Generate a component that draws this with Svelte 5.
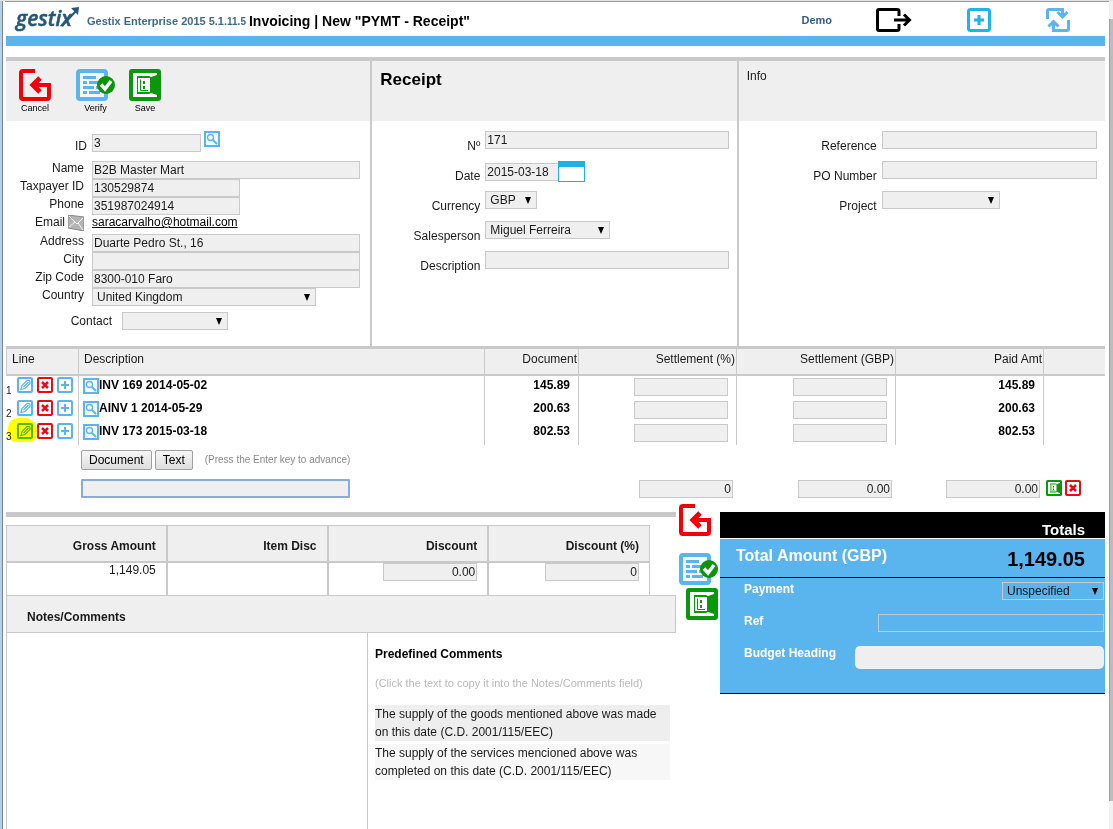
<script>
    let client = $state({
        id: '3',
        name: 'B2B Master Mart',
        taxpayer: '130529874',
        phone: '351987024914',
        email: 'saracarvalho@hotmail.com',
        address: 'Duarte Pedro St., 16',
        city: '',
        zip: '8300-010 Faro'
    });

    let receipt = $state({ number: '171', date: '2015-03-18', description: '' });
    let info = $state({ reference: '', po: '' });

    let lines = $state([
        { id: 1, text: 'INV 169 2014-05-02', document: '145.89', percent: '', amount: '', paid: '145.89' },
        { id: 2, text: 'AINV 1 2014-05-29', document: '200.63', percent: '', amount: '', paid: '200.63' },
        { id: 3, text: 'INV 173 2015-03-18', document: '802.53', percent: '', amount: '', paid: '802.53', marked: true }
    ]);

    let entry = $state({ text: '', percent: '0', amount: '0.00', paid: '0.00' });
    let discount = $state({ value: '0.00', percent: '0' });
    let notes = $state('');

    const comments = [
        'The supply of the goods mentioned above was made on this date (C.D. 2001/115/EEC)',
        'The supply of the services mencioned above was completed on this date (C.D. 2001/115/EEC)'
    ];

    function removeLine(id) {
        lines = lines.filter((line) => line.id !== id);
    }

    function addComment(text) {
        notes = notes ? notes + '\n' + text : text;
    }
</script>

{#snippet cancelIcon()}
    <svg width="32" height="32" viewBox="0 0 32 32" fill="none" stroke="#f00008" stroke-width="4">
        <path d="M16 2H4Q2 2 2 4V28Q2 30 4 30H28Q30 30 30 28V16H13" />
        <path d="M21 9L14 16L21 23" stroke-width="5" />
    </svg>
{/snippet}

{#snippet verifyIcon()}
    <svg width="39" height="32" viewBox="0 0 39 32" fill="none">
        <rect x="2" y="2" width="28" height="28" rx="2" fill="#f4f8fb" stroke="#5ab5ea" stroke-width="4" />
        <path d="M7 8.500H20M7 13.500H11M13 13.500H22M7 18.500H18M20 18.500H22M7 23.500H11M13 23.500H24" stroke="#5ab5ea" stroke-width="3" />
        <circle cx="30" cy="16" r="9" fill="#0b940b" />
        <path d="M25 15.500L29 20L35 12" stroke="#fff" stroke-width="3.500" />
    </svg>
{/snippet}

{#snippet saveIcon(size)}
    <svg width={size} height={size} viewBox="0 0 32 32" fill="none">
        <rect width="32" height="32" rx="3" fill="#0b960b" />
        <path d="M4 4H28V6L22 8L20 7H8V25H20L22 24L28 26V28H4Z" fill="#fff" />
        <rect x="9" y="9" width="12" height="14" fill="#fff" />
        <path d="M11.500 10.500V21.500H19" stroke="#0b960b" />
        <path d="M14 12H16V15H14ZM14 17H16V20H14Z" fill="#0b960b" />
    </svg>
{/snippet}

{#snippet searchIcon()}
    <svg width="16" height="16" viewBox="0 0 16 16" fill="none" stroke="#5ab5ea">
        <rect x="1" y="1" width="14" height="14" stroke-width="2" fill="#f4fbff" />
        <circle cx="6.500" cy="6.500" r="3" stroke-width="1.300" />
        <path d="M9 9L13 13" stroke-width="2" />
    </svg>
{/snippet}

{#snippet editIcon()}
    <svg width="16" height="16" viewBox="0 0 16 16" fill="none" stroke="#5ab5ea">
        <rect x="1" y="1" width="14" height="14" rx="1" stroke-width="2" fill="#fff" />
        <path d="M4 12.500L5 8.500L10 3.500Q13.500 2.500 13 6.500L8 11.500Z" stroke-width="1.200" />
        <path d="M6.500 10L11.500 5" stroke-width="1.500" />
    </svg>
{/snippet}

{#snippet deleteIcon()}
    <svg width="16" height="16" viewBox="0 0 16 16" fill="none" stroke="#e01018">
        <rect x="1" y="1" width="14" height="14" rx="1" stroke-width="2" fill="#fff" />
        <path d="M5 5L11 11M11 5L5 11" stroke-width="2.500" />
    </svg>
{/snippet}

{#snippet plusIcon()}
    <svg width="16" height="16" viewBox="0 0 16 16" fill="none" stroke="#5ab5ea">
        <rect x="1" y="1" width="14" height="14" rx="1" stroke-width="2" fill="#fff" />
        <path d="M8 4V12M4 8H12" stroke-width="2" />
    </svg>
{/snippet}

<div class="window">
    <div class="window-edge"></div>

    <main class="page">
        <header class="topbar">
            <svg class="logo" width="64" height="28" viewBox="0 0 64 28" role="img" aria-label="gestix">
                <text x="0" y="21" font-family="'Open Sans', sans-serif" font-size="21" font-weight="600" font-style="italic" fill="#24587a" stroke="#24587a" stroke-width="0.500">gestix</text>
                <path d="M46 21L60 6" stroke="#24587a" stroke-width="2" />
                <path d="M55 3L63 2L62 10Z" fill="#24587a" />
            </svg>
            <span class="product">Gestix Enterprise 2015 5.1.<small>11.5</small></span>
            <h1>Invoicing | New "PYMT - Receipt"</h1>
            <nav>
                <a class="user" href="#demo">Demo</a>
                <button class="icon" aria-label="Exit">
                    <svg width="36" height="24" viewBox="0 0 36 24" fill="none" stroke="#000" stroke-width="3">
                        <path d="M23 8V3Q23 1.500 21 1.500H3Q1.500 1.500 1.500 3V21Q1.500 22.500 3 22.500H21Q23 22.500 23 21V16" />
                        <path d="M18 12H33M28 6.500L33.500 12L28 17.500" />
                    </svg>
                </button>
                <button class="icon" aria-label="New">
                    <svg width="24" height="24" viewBox="0 0 24 24" fill="none" stroke="#1db4ea">
                        <rect x="1.500" y="1.500" width="21" height="21" rx="2" stroke-width="3" />
                        <path d="M12 7V17M7 12H17" stroke-width="3" />
                    </svg>
                </button>
                <button class="icon" aria-label="Refresh">
                    <svg width="24" height="24" viewBox="0 0 24 24" fill="none" stroke="#5ab5ee" stroke-width="3">
                        <path d="M1.500 11V3Q1.500 1.500 3 1.500H16.500V9M11.500 4L16.500 9L21.500 4" />
                        <path d="M22.500 12V21Q22.500 22.500 21 22.500H16M2 22.500H2M7.500 24V14M2.500 18.500L7.500 13.500L12.500 18.500M7.500 22.500H17" />
                    </svg>
                </button>
            </nav>
        </header>

        <section class="panels">
            <div class="panel">
                <div class="panel-head tools">
                    <button class="tool">{@render cancelIcon()}<span>Cancel</span></button>
                    <button class="tool verify">{@render verifyIcon()}<span>Verify</span></button>
                    <button class="tool">{@render saveIcon(32)}<span>Save</span></button>
                </div>
                <div class="panel-body client">
                    <div class="field field-id">
                        <label for="client-id">ID</label>
                        <input id="client-id" class="id-input" bind:value={client.id}>
                        <button class="icon" aria-label="Search client">{@render searchIcon()}</button>
                    </div>
                    <div class="row">
                        <label for="name">Name</label>
                        <input id="name" bind:value={client.name}>
                    </div>
                    <div class="row">
                        <label for="taxpayer">Taxpayer ID</label>
                        <input id="taxpayer" class="short" bind:value={client.taxpayer}>
                    </div>
                    <div class="row">
                        <label for="phone">Phone</label>
                        <input id="phone" class="short" bind:value={client.phone}>
                    </div>
                    <div class="row email">
                        <span class="row-label">Email
                            <svg width="16" height="16" viewBox="0 0 16 16" aria-hidden="true">
                                <path d="M0 0L16 2V16L0 13Z" fill="#b4b4b4" stroke="#888" />
                                <path d="M1 1L9 9L15 3M1 12L7 7M15 15L10 8" fill="none" stroke="#f4f4f4" />
                            </svg>
                        </span>
                        <a href="mailto:{client.email}">{client.email}</a>
                    </div>
                    <div class="row">
                        <label for="address">Address</label>
                        <input id="address" bind:value={client.address}>
                    </div>
                    <div class="row">
                        <label for="city">City</label>
                        <input id="city" bind:value={client.city}>
                    </div>
                    <div class="row">
                        <label for="zip">Zip Code</label>
                        <input id="zip" bind:value={client.zip}>
                    </div>
                    <div class="row">
                        <label for="country">Country</label>
                        <span class="select country"><select id="country"><option>United Kingdom</option></select></span>
                    </div>
                    <div class="row contact">
                        <label for="contact">Contact</label>
                        <span class="select"><select id="contact"><option></option></select></span>
                    </div>
                </div>
            </div>

            <div class="panel">
                <div class="panel-head"><h2>Receipt</h2></div>
                <div class="panel-body">
                    <div class="field">
                        <label for="number">Nº</label>
                        <input id="number" bind:value={receipt.number}>
                    </div>
                    <div class="field">
                        <label for="date">Date</label>
                        <input id="date" class="date-input" bind:value={receipt.date}>
                        <button class="calendar" aria-label="Pick a date"></button>
                    </div>
                    <div class="field">
                        <label for="currency">Currency</label>
                        <span class="select currency"><select id="currency"><option>GBP</option></select></span>
                    </div>
                    <div class="field">
                        <label for="salesperson">Salesperson</label>
                        <span class="select salesperson"><select id="salesperson"><option>Miguel Ferreira</option></select></span>
                    </div>
                    <div class="field">
                        <label for="description">Description</label>
                        <input id="description" bind:value={receipt.description}>
                    </div>
                </div>
            </div>

            <div class="panel info">
                <div class="panel-head"><h3>Info</h3></div>
                <div class="panel-body">
                    <div class="field">
                        <label for="reference">Reference</label>
                        <input id="reference" bind:value={info.reference}>
                    </div>
                    <div class="field">
                        <label for="po">PO Number</label>
                        <input id="po" bind:value={info.po}>
                    </div>
                    <div class="field">
                        <label for="project">Project</label>
                        <span class="select project"><select id="project"><option></option></select></span>
                    </div>
                </div>
            </div>
        </section>

        <table class="lines">
            <colgroup>
                <col class="col-line"><col><col class="col-document"><col class="col-percent"><col class="col-amount"><col class="col-paid"><col class="col-end">
            </colgroup>
            <thead>
                <tr>
                    <th class="left">Line</th>
                    <th class="left">Description</th>
                    <th>Document</th>
                    <th>Settlement (%)</th>
                    <th>Settlement (GBP)</th>
                    <th>Paid Amt</th>
                    <th></th>
                </tr>
            </thead>
            <tbody>
                {#each lines as line (line.id)}
                    <tr class="line">
                        <td>
                            <div class="line-tools">
                                <span class="line-number">{line.id}</span>
                                <button class="icon" class:marked={line.marked} aria-label="Edit line {line.id}">{@render editIcon()}</button>
                                <button class="icon" aria-label="Delete line {line.id}" onclick={() => removeLine(line.id)}>{@render deleteIcon()}</button>
                                <button class="icon" aria-label="Insert after line {line.id}">{@render plusIcon()}</button>
                            </div>
                        </td>
                        <td>
                            <div class="line-text">
                                <button class="icon" aria-label="Open {line.text}">{@render searchIcon()}</button>
                                <strong>{line.text}</strong>
                            </div>
                        </td>
                        <td class="amount">{line.document}</td>
                        <td class="cell-input"><input aria-label="Settlement percent, line {line.id}" bind:value={line.percent}></td>
                        <td class="cell-input"><input aria-label="Settlement GBP, line {line.id}" bind:value={line.amount}></td>
                        <td class="amount">{line.paid}</td>
                        <td></td>
                    </tr>
                {/each}
                <tr class="entry-buttons">
                    <td></td>
                    <td colspan="6">
                        <div class="entry-tools">
                            <button class="push">Document</button>
                            <button class="push">Text</button>
                            <small>(Press the Enter key to advance)</small>
                        </div>
                    </td>
                </tr>
                <tr class="entry">
                    <td></td>
                    <td colspan="2"><input class="entry-text" aria-label="New line" bind:value={entry.text}></td>
                    <td class="number"><input aria-label="Settlement percent" bind:value={entry.percent}></td>
                    <td class="number"><input aria-label="Settlement GBP" bind:value={entry.amount}></td>
                    <td class="number"><input aria-label="Paid amount" bind:value={entry.paid}></td>
                    <td>
                        <div class="entry-end">
                            <button class="icon" aria-label="Save line">{@render saveIcon(16)}</button>
                            <button class="icon" aria-label="Discard line">{@render deleteIcon()}</button>
                        </div>
                    </td>
                </tr>
            </tbody>
        </table>

        <section class="bottom">
            <div class="summary">
                <table class="amounts">
                    <thead>
                        <tr>
                            <th>Gross Amount</th>
                            <th>Item Disc</th>
                            <th>Discount</th>
                            <th>Discount (%)</th>
                        </tr>
                    </thead>
                    <tbody>
                        <tr>
                            <td>1,149.05</td>
                            <td></td>
                            <td><input aria-label="Discount" bind:value={discount.value}></td>
                            <td><input aria-label="Discount percent" bind:value={discount.percent}></td>
                        </tr>
                    </tbody>
                </table>
                <label class="notes-head" for="notes">Notes/Comments</label>
                <div class="notes">
                    <textarea id="notes" bind:value={notes}></textarea>
                    <div class="predefined">
                        <h4>Predefined Comments</h4>
                        <p>(Click the text to copy it into the Notes/Comments field)</p>
                        {#each comments as comment}
                            <button class="comment" onclick={() => addComment(comment)}>{comment}</button>
                        {/each}
                    </div>
                </div>
            </div>

            <div class="side-tools">
                <button class="icon cancel" aria-label="Cancel">{@render cancelIcon()}</button>
                <button class="icon" aria-label="Verify">{@render verifyIcon()}</button>
                <button class="icon save" aria-label="Save">{@render saveIcon(32)}</button>
            </div>

            <div class="totals">
                <div class="totals-head">Totals</div>
                <div class="total">
                    <span>Total Amount (GBP)</span>
                    <strong>1,149.05</strong>
                </div>
                <div class="payment">
                    <div class="payment-row">
                        <label for="payment">Payment</label>
                        <span class="select method"><select id="payment"><option>Unspecified</option></select></span>
                    </div>
                    <div class="payment-row">
                        <label for="ref">Ref</label>
                        <input id="ref">
                    </div>
                    <div class="payment-row">
                        <label for="budget">Budget Heading</label>
                        <input id="budget" class="budget">
                    </div>
                </div>
            </div>
        </section>
    </main>

    <div class="scrollbar"><span></span></div>
</div>

<style>
    :global(body) {
        background: #fff;
    }
    .window {
        --line: #c9c9c9;
        --fill: #efefef;
        --blue: #5ab5ee;
        display: flex;
        box-sizing: border-box;
        min-height: 100vh;
        border-top: 1px solid #e4e4e4;
        font-family: "Liberation Sans", Arial, sans-serif;
        font-size: 12px;
        line-height: 14px;
        color: #1a1a1a;
    }
    .window-edge {
        width: 2px;
        margin-right: 2px;
        border-right: 1px solid #6f86a3;
        background: #b9cfe6;
    }
    .page {
        flex: 1;
        display: flex;
        flex-direction: column;
        min-width: 0;
        padding: 0 4px 0 1px;
        border-top: 1px solid #9b9b9b;
    }
    .scrollbar {
        width: 4px;
        padding: 18px 0 28px;
        box-sizing: border-box;
        background: #f1f1f1;
    }
    .scrollbar span {
        display: block;
        height: 100%;
        border-left: 1px solid #a0a0a0;
        background: #bcbcbc;
    }

    h1, h2, h3, h4, p {
        margin: 0;
    }
    input, select, textarea, button {
        box-sizing: border-box;
        margin: 0;
        font: inherit;
        color: inherit;
    }
    input, select {
        height: 18px;
        padding: 0 1px;
        border: 1px solid var(--line);
        border-radius: 0;
        background: var(--fill);
    }
    .icon, .tool {
        display: block;
        padding: 0;
        border: 0;
        background: none;
        cursor: pointer;
    }
    svg {
        display: block;
    }
    .select {
        position: relative;
        display: block;
    }
    .select select {
        display: block;
        width: 100%;
        padding: 0 4px;
        appearance: none;
    }
    .select::after {
        content: '';
        position: absolute;
        top: 6px;
        right: 6px;
        border: 3px solid transparent;
        border-top: 7px solid #000;
        border-bottom: 0;
        pointer-events: none;
    }

    .topbar {
        display: flex;
        align-items: center;
        height: 34px;
        padding-left: 10px;
        border-bottom: 10px solid var(--blue);
    }
    .logo {
        margin-right: 7px;
        overflow: visible;
    }
    .product {
        margin-right: 3px;
        padding-top: 5px;
        font-size: 11px;
        font-weight: bold;
        color: #3d6a8c;
    }
    .product small {
        font-size: 10px;
    }
    h1 {
        padding-top: 3px;
        font-size: 14px;
        line-height: 16px;
        color: #000;
    }
    nav {
        display: flex;
        align-items: center;
        margin-left: auto;
        padding: 2px 35px 0 0;
    }
    .user {
        margin-right: 44px;
        font-size: 11px;
        font-weight: bold;
        color: #355e80;
        text-decoration: none;
    }
    nav .icon + .icon {
        margin-left: 55px;
    }

    .panels {
        display: grid;
        grid-template-columns: repeat(3, 1fr);
        margin-top: 11px;
        border-top: 4px solid var(--line);
        border-bottom: 3px solid var(--line);
    }
    .panel {
        border-right: 2px solid var(--line);
    }
    .panel:last-child {
        border-right: 0;
    }
    .panel-head {
        box-sizing: border-box;
        height: 60px;
        padding: 8px;
        background: var(--fill);
    }
    .panel-body {
        padding: 10px 8px 16px 0;
    }
    h2 {
        font-size: 17px;
        line-height: 22px;
        color: #000;
    }
    h3 {
        font-size: 12px;
        font-weight: normal;
    }
    .tools {
        display: flex;
        gap: 14px;
        padding-left: 13px;
    }
    .tool {
        font-size: 9px;
        line-height: 14px;
        text-align: center;
        color: #000;
    }
    .tool.verify {
        margin-left: 11px;
    }
    .tool span {
        display: block;
    }

    .field {
        display: flex;
        align-items: flex-start;
        height: 30px;
    }
    .field label {
        width: 108px;
        margin: 8px 5px 0 0;
        text-align: right;
    }
    .info .field label {
        width: 138px;
    }
    .field input {
        flex: 1;
        min-width: 0;
    }
    .client .field-id label {
        width: 81px;
    }
    .field .id-input {
        flex: none;
        width: 109px;
        margin: 3px 3px 0 0;
    }
    .field .date-input {
        flex: none;
        width: 73px;
        margin-top: 2px;
        border-right: 0;
    }
    .calendar {
        width: 27px;
        height: 21px;
        padding: 0;
        border: 1px solid #1db0e4;
        border-top-width: 6px;
        background: #fff;
    }
    .currency {
        width: 52px;
    }
    .salesperson {
        width: 125px;
    }
    .project {
        width: 118px;
    }
    .row {
        display: grid;
        grid-template-columns: 78px 1fr;
        column-gap: 8px;
        margin-right: 2px;
    }
    .row label, .row-label {
        text-align: right;
    }
    .row .short {
        width: 148px;
    }
    .row-label {
        display: flex;
        justify-content: flex-end;
        gap: 3px;
    }
    .email {
        height: 19px;
    }
    .email a {
        color: #000;
    }
    .country {
        width: 224px;
    }
    .contact {
        grid-template-columns: 106px 106px;
        column-gap: 10px;
        align-items: center;
        margin-top: 6px;
    }

    .lines {
        width: 100%;
        table-layout: fixed;
        border-spacing: 0;
    }
    .col-line { width: 73px; }
    .col-document { width: 94px; }
    .col-percent { width: 158px; }
    .col-amount { width: 159px; }
    .col-paid { width: 148px; }
    .col-end { width: 61px; }

    .lines th, .lines td {
        padding: 0;
        vertical-align: top;
    }
    .lines th {
        height: 22px;
        padding: 3px 1px 0 0;
        border-right: 1px solid var(--line);
        border-bottom: 2px solid var(--line);
        background: var(--fill);
        font-weight: normal;
        text-align: right;
    }
    .lines .left {
        padding-left: 5px;
        text-align: left;
    }
    .lines th:first-child {
        border-left: 1px solid var(--line);
    }
    .lines th:last-child, .line td:last-child {
        border-right: 0;
    }
    .line td {
        box-sizing: border-box;
        height: 23px;
        border-right: 1px solid var(--line);
    }
    .line-tools {
        display: flex;
        align-items: flex-start;
        gap: 4px;
        padding-top: 1px;
    }
    .line-number {
        width: 7px;
        padding-top: 8px;
        font-size: 10px;
        line-height: 12px;
    }
    .marked {
        position: relative;
    }
    .marked::after {
        content: '';
        position: absolute;
        inset: -5px -4px -3px -9px;
        border-radius: 10px 12px 8px 8px;
        background: #ff0;
        mix-blend-mode: multiply;
    }
    .line-text {
        display: flex;
        align-items: flex-start;
        padding: 2px 0 0 4px;
        color: #000;
    }
    .lines .amount {
        padding-right: 8px;
        line-height: 18px;
        font-weight: bold;
        text-align: right;
        color: #000;
    }
    .lines .cell-input {
        padding: 2px 8px 0 0;
        text-align: right;
    }
    .cell-input input, .number input, .amounts input {
        display: block;
        width: 94px;
        margin-left: auto;
        text-align: right;
    }
    .entry-tools {
        display: flex;
        align-items: center;
        gap: 3px;
        padding: 5px 0 9px 2px;
    }
    .entry-tools small {
        margin-left: 9px;
        font-size: 10px;
        color: #888;
    }
    .push {
        height: 20px;
        padding: 0 7px;
        border: 1px solid #a0a0a0;
        border-radius: 2px;
        background: linear-gradient(#f6f6f6, #dedede);
        line-height: 18px;
        color: #000;
    }
    .entry td {
        box-sizing: border-box;
        height: 25px;
    }
    .entry .entry-text {
        display: block;
        width: 269px;
        height: 19px;
        margin-left: 2px;
        border: 2px solid #8aaae0;
        border-radius: 1px;
    }
    .lines .number {
        padding: 1px 4px 0 0;
    }
    .entry-end {
        display: flex;
        gap: 3px;
        padding: 1px 0 0 2px;
    }

    .bottom {
        flex: 1;
        display: flex;
        align-items: flex-start;
    }
    .summary {
        flex: 1;
        align-self: stretch;
        display: flex;
        flex-direction: column;
        margin-top: 8px;
        border-top: 5px solid var(--line);
    }
    .amounts {
        width: 644px;
        margin-top: 8px;
        table-layout: fixed;
        border-left: 1px solid var(--line);
        border-top: 1px solid var(--line);
        border-spacing: 0;
    }
    .amounts th, .amounts td {
        padding: 0 10px 0 0;
        border-right: 2px solid var(--line);
        text-align: right;
    }
    .amounts th:last-child, .amounts td:last-child {
        border-right-width: 1px;
    }
    .amounts th {
        box-sizing: border-box;
        height: 37px;
        padding-top: 4px;
        border-bottom: 2px solid var(--line);
        background: var(--fill);
    }
    .amounts td {
        height: 32px;
        vertical-align: top;
    }
    .notes-head {
        padding: 14px 20px 8px;
        border: 1px solid var(--line);
        background: var(--fill);
        font-weight: bold;
    }
    .notes {
        flex: 1;
        display: flex;
    }
    textarea {
        width: 362px;
        min-height: 190px;
        border: 1px solid var(--line);
        border-width: 0 1px;
        background: #fff;
        resize: none;
    }
    .predefined {
        flex: 1;
        padding: 14px 6px 0 7px;
    }
    h4 {
        font-size: 12px;
        color: #000;
    }
    p {
        margin: 15px 0;
        font-size: 11px;
        line-height: 14px;
        white-space: nowrap;
        color: #b8b8b8;
    }
    .comment {
        display: block;
        width: 100%;
        margin-bottom: 3px;
        padding: 0;
        border: 0;
        background: #eee;
        line-height: 18px;
        text-align: left;
    }
    .comment:last-child {
        background: #f7f7f7;
    }

    .side-tools {
        width: 44px;
    }
    .side-tools .icon {
        margin: 0 0 3px 3px;
    }
    .side-tools .cancel {
        margin-bottom: 17px;
    }
    .side-tools .save {
        margin-left: 10px;
    }

    .totals {
        width: 385px;
        margin-top: 8px;
        border-bottom: 1px solid #000;
        background: var(--blue);
        color: #fff;
    }
    .totals-head {
        padding: 10px 20px 0;
        border-bottom: 1px solid #fff;
        background: #000;
        font-size: 15px;
        line-height: 16px;
        font-weight: bold;
        text-align: right;
    }
    .total {
        display: flex;
        justify-content: space-between;
        padding: 7px 20px 7px 16px;
        border-bottom: 1px solid #000;
        font-size: 16px;
        line-height: 20px;
        font-weight: bold;
    }
    .total strong {
        padding-top: 2px;
        font-size: 20px;
        line-height: 22px;
        color: #000;
    }
    .payment {
        padding: 4px 1px 15px 24px;
    }
    .payment-row {
        display: flex;
        justify-content: space-between;
        height: 32px;
        font-weight: bold;
    }
    .payment-row select, .payment-row input {
        background: transparent;
        font-weight: normal;
        color: #111;
    }
    .payment-row input {
        width: 226px;
    }
    .method {
        width: 102px;
    }
    .payment-row .budget {
        width: 249px;
        height: 23px;
        border: 0;
        border-radius: 5px;
        background: var(--fill);
    }
</style>
